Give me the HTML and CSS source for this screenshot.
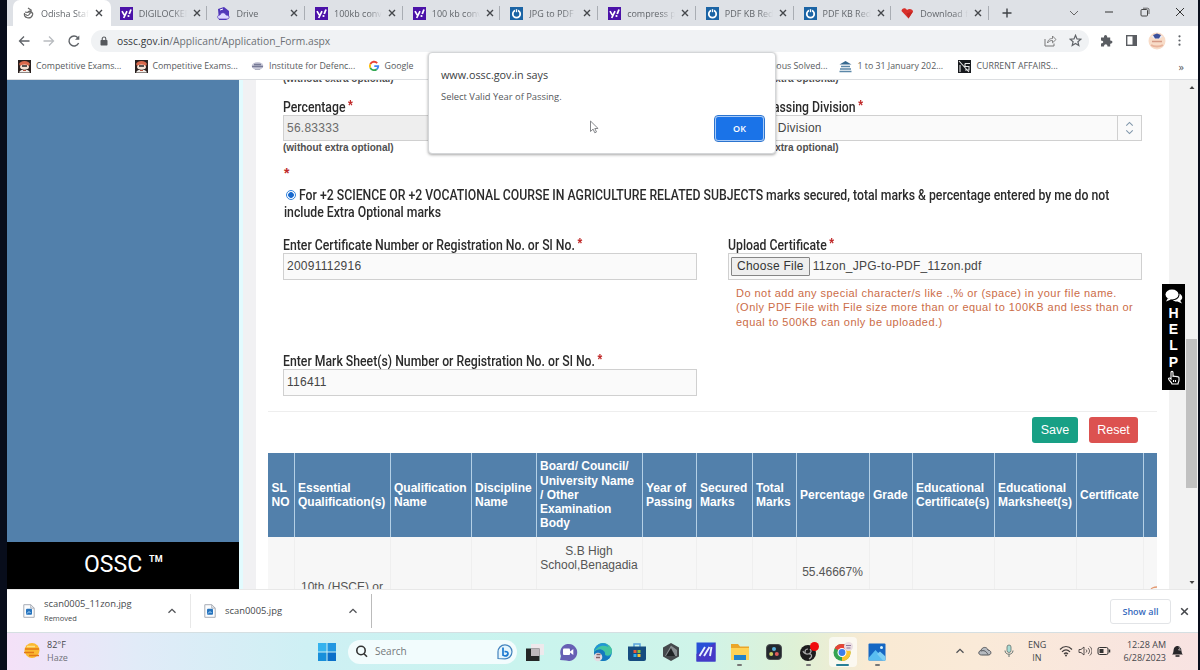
FILE: index.html
```html
<!DOCTYPE html>
<html lang="en">
<head>
    <meta charset="UTF-8">
    <meta name="viewport" content="width=device-width, initial-scale=1.0">
    <title>Odisha Staff Selection Commission</title>
    <link rel="stylesheet" href="styles.css">
</head>
<body>
    <svg class="defs" width="0" height="0">
        <symbol id="yahoo" viewBox="0 0 13 13"><rect width="13" height="13" fill="#4b12a8"/><path d="M2 4.200l2.300 4M7 4.200L3.700 11" stroke="#fff" stroke-width="1.700" fill="none"/><path d="M9.200 7L11 2.500" stroke="#fff" stroke-width="1.800"/><circle cx="8.500" cy="9" r="1.100" fill="#fff"/></symbol>
        <symbol id="pdf" viewBox="0 0 13 13"><rect width="13" height="13" fill="#1b64a5"/><circle cx="6.500" cy="7" r="3.700" fill="none" stroke="#fff" stroke-width="1.800"/><path d="M6.500 2v4" stroke="#1b64a5" stroke-width="3"/><path d="M6.500 2.200v3" stroke="#fff" stroke-width="1.400"/></symbol>
        <symbol id="x" viewBox="0 0 10 10"><path d="M2 2l6 6M8 2L2 8" stroke="#44474b" stroke-width="1.400" fill="none"/></symbol>
        <symbol id="exam" viewBox="0 0 13 13"><rect width="13" height="13" fill="#29201f"/><ellipse cx="6.500" cy="4" rx="5.300" ry="3" fill="#d9694c"/><ellipse cx="6.500" cy="7" rx="4.500" ry="2.500" fill="#f5e2d5"/><path d="M4 6h5" stroke="#222" stroke-width="1.500"/><path d="M1 12.500c1-4 10-4 11 0z" fill="#f2eeea"/><path d="M5 10.500h3" stroke="#b34a36"/></symbol>
        <symbol id="up" viewBox="0 0 10 10"><path d="M1.500 6.800L5 3.300l3.500 3.500" stroke="#505256" stroke-width="1.300" fill="none"/></symbol>
        <symbol id="file" viewBox="0 0 12 14"><path d="M.8.700h7l3.400 3.400v9.200H.8z" fill="#fbfcfe" stroke="#a9adb6"/><path d="M7.800.700v3.400h3.400" fill="none" stroke="#a9adb6"/><rect x="3" y="4.700" width="6" height="6" rx="1" fill="#2673bd"/><path d="M4 9.500l2-2 1.500 1.500" stroke="#bfe4ff" fill="none"/></symbol>
    </svg>

    <div class="window">
        <!-- tab strip -->
        <div class="tabs">
            <div class="tab active">
                <svg class="fav" viewBox="0 0 13 13"><path d="M6 1l3 2-3 2M3 5c3 1 5 0 7-1M2.500 6c-1 5 6 7 8 2 1-3-2-3-3-1s-3 2-4 0" fill="none" stroke="#666" stroke-width="1.200"/></svg>
                <span class="tab-title">Odisha Staff</span><svg class="close"><use href="#x"/></svg>
            </div>
            <div class="tab"><svg class="fav"><use href="#yahoo"/></svg><span class="tab-title">DIGILOCKER</span><svg class="close"><use href="#x"/></svg></div>
            <div class="tab">
                <svg class="fav" viewBox="0 0 13 13"><path d="M1 2l6-2 5 4v7l-3 2H2z" fill="#5137b9"/><path d="M2 12c-2-1-2-4 1-4 1-3 5-3 6 0 4 0 4 4 1 4z" fill="#dcd6ff" stroke="#5137b9" stroke-width=".7"/><path d="M3 3l3-1" stroke="#fff"/></svg>
                <span class="tab-title">Drive</span><svg class="close"><use href="#x"/></svg>
            </div>
            <div class="tab"><svg class="fav"><use href="#yahoo"/></svg><span class="tab-title">100kb converter</span><svg class="close"><use href="#x"/></svg></div>
            <div class="tab"><svg class="fav"><use href="#yahoo"/></svg><span class="tab-title">100 kb converter</span><svg class="close"><use href="#x"/></svg></div>
            <div class="tab"><svg class="fav"><use href="#pdf"/></svg><span class="tab-title">JPG to PDF</span><svg class="close"><use href="#x"/></svg></div>
            <div class="tab"><svg class="fav"><use href="#yahoo"/></svg><span class="tab-title">compress pdf</span><svg class="close"><use href="#x"/></svg></div>
            <div class="tab"><svg class="fav"><use href="#pdf"/></svg><span class="tab-title">PDF KB Reducer</span><svg class="close"><use href="#x"/></svg></div>
            <div class="tab"><svg class="fav"><use href="#pdf"/></svg><span class="tab-title">PDF KB Reducer</span><svg class="close"><use href="#x"/></svg></div>
            <div class="tab">
                <svg class="fav" viewBox="0 0 13 13"><path d="M.5 4c0-3 4-4 5.500-1 2-2 6-1 6 1.500L7.500 11.500z" fill="#d9302b"/><path d="M5.500 6.500l6.500-2-4.500 7z" fill="#c32622"/></svg>
                <span class="tab-title">Download file</span><svg class="close"><use href="#x"/></svg>
            </div>
            <svg class="plus" viewBox="0 0 12 12"><path d="M6 1.500v9M1.500 6h9" stroke="#3f4246" stroke-width="1.400"/></svg>
            <div class="controls">
                <svg viewBox="0 0 12 12"><path d="M2 4l4 4 4-4" stroke="#666" fill="none"/></svg>
                <svg viewBox="0 0 12 12"><path d="M2 5h8" stroke="#333"/></svg>
                <svg viewBox="0 0 12 12"><rect x="2" y="2.500" width="6.500" height="6.500" rx="1" fill="none" stroke="#444"/><path d="M4 1.200h4.500q1.500 0 1.500 1.500V7" fill="none" stroke="#444" stroke-width=".8"/></svg>
                <svg viewBox="0 0 12 12"><path d="M2 1l8 8M10 1l-8 8" stroke="#333"/></svg>
            </div>
        </div>

        <!-- address bar -->
        <div class="toolbar">
            <svg class="nav" viewBox="0 0 14 14"><path d="M12.500 7H2.500M7 2.500L2.500 7 7 11.500" stroke="#5f6368" stroke-width="1.300" fill="none"/></svg>
            <svg class="nav" viewBox="0 0 14 14"><path d="M1.500 7h10M7 2.500L11.500 7 7 11.500" stroke="#b9bcc0" stroke-width="1.300" fill="none"/></svg>
            <svg class="nav" viewBox="0 0 14 14"><path d="M11.600 9A5 5 0 1 1 10.800 3.700" stroke="#5f6368" stroke-width="1.400" fill="none"/><path d="M12.300 1.500v4.300H8z" fill="#5f6368"/></svg>
            <div class="omnibox">
                <svg class="lock" viewBox="0 0 8 10"><rect x=".5" y="4" width="7" height="5.500" rx=".7" fill="#55585c"/><path d="M2.200 4V2.800a1.800 1.800 0 0 1 3.600 0V4" fill="none" stroke="#55585c" stroke-width="1.100"/></svg>
                <span class="url"><b>ossc.gov.in</b>/Applicant/Application_Form.aspx</span>
                <svg class="share" viewBox="0 0 13 13"><path d="M1 5v7h9V9.500" fill="none" stroke="#777"/><path d="M3.500 9c.5-3.500 2.500-4.500 5-4.500V2L12 5.500 8.500 8.800V6.500C6.500 6.500 5 7 3.500 9z" fill="none" stroke="#777" stroke-width=".9"/></svg>
                <svg class="star" viewBox="0 0 13 13"><path d="M6.500 1.300l1.500 3.600 3.900.3-3 2.500.9 3.800-3.300-2-3.300 2 .9-3.800-3-2.500 3.900-.3z" fill="none" stroke="#5f6368" stroke-width="1.200"/></svg>
            </div>
            <div class="tools">
                <svg viewBox="0 0 13 13"><path d="M1 3.500h3C3.500 0 7.500 0 7.200 3.500h3V6.500c3-.3 3 3.500 0 3.200v2.800H7.500c0-3-3.500-3-3.500 0H1V9.500c3 0 3-3 0-3z" fill="#5a5d62"/></svg>
                <svg viewBox="0 0 13 13"><rect x="1.700" y="1.700" width="9.600" height="9.600" fill="none" stroke="#5a5d62" stroke-width="1.400"/><path d="M7.500 2h4v9h-4z" fill="#5a5d62"/></svg>
                <svg class="avatar" viewBox="0 0 18 18"><circle cx="9" cy="9" r="8.500" fill="#f8dcc8"/><path d="M3 4h12l-3 2.500H6z" fill="#e8edfa"/><path d="M5 3l4-1.500L13 3l-2 3.500H7z" fill="#3a509c"/><path d="M4 9.500h10" stroke="#d69a85" stroke-width="1.500"/><path d="M3 13c3 2 9 2 12 0" stroke="#e9b49c" stroke-width="2" fill="none"/></svg>
                <svg class="menu" viewBox="0 0 13 13"><circle cx="6.500" cy="2.300" r="1.100" fill="#5f6368"/><circle cx="6.500" cy="6.500" r="1.100" fill="#5f6368"/><circle cx="6.500" cy="10.700" r="1.100" fill="#5f6368"/></svg>
            </div>
        </div>

        <!-- bookmarks -->
        <div class="bookmarks">
            <a class="bm bm1"><svg class="fav"><use href="#exam"/></svg><span>Competitive Exams...</span></a>
            <a class="bm bm2"><svg class="fav"><use href="#exam"/></svg><span>Competitive Exams...</span></a>
            <a class="bm bm3"><svg class="fav" viewBox="0 0 13 13"><ellipse cx="6.500" cy="6" rx="5.800" ry="4" fill="#c9cad8"/><path d="M1 6.500h11M3 4.500h7" stroke="#777a96" stroke-width="1.500"/><path d="M4 9.500h5" stroke="#aeb0c0"/></svg><span>Institute for Defenc...</span></a>
            <a class="bm bm4"><svg class="fav google" viewBox="0 0 13 13"><g fill="none" stroke-width="2"><path d="M10 3.300A4.600 4.600 0 0 0 2.500 4.500" stroke="#ea4335"/><path d="M2.500 4.500a4.600 4.600 0 0 0 0 4" stroke="#fbbc05"/><path d="M2.500 8.500a4.600 4.600 0 0 0 7 1.500" stroke="#34a853"/><path d="M9.500 10c1.200-1 1.600-2 1.600-3.300H6.800" stroke="#4285f4"/></g></svg><span>Google</span></a>
            <a class="bm bm5"><span>Previous Solved...</span></a>
            <a class="bm bm6"><svg class="fav" viewBox="0 0 13 13"><path d="M.5 4.500L6.500 1l6 3.500z" fill="#37698f"/><path d="M2 6.500h9M1 9h11M.5 11.500h12" stroke="#5b87a8" stroke-width="1.300"/></svg><span>1 to 31 January 202...</span></a>
            <a class="bm bm7"><svg class="fav" viewBox="0 0 13 13"><rect width="13" height="13" fill="#17191d"/><path d="M1 1l10 11M7 3.500h5M7 3.500v3h4v3.500H7M2 5v7" stroke="#e8e8e8" fill="none" stroke-width="1.100"/></svg><span>CURRENT AFFAIRS...</span></a>
            <span class="more">»</span>
        </div>

        <!-- page -->
        <div class="page">
            <div class="sidebar"><div class="brand"><span>OSSC</span><sup>TM</sup></div></div>
            <div class="gutter"></div>
            <div class="panel">
                <div class="form">
                    <div class="cols clipped">
                        <div class="hint">(without extra optional)</div>
                        <div class="hint">(without extra optional)</div>
                    </div>
                    <div class="cols marks">
                        <div>
                            <label><span class="cond">Percentage<i>*</i></span></label>
                            <div class="input disabled">56.83333</div>
                            <div class="hint">(without extra optional)</div>
                        </div>
                        <div>
                            <label><span class="cond">Select Passing Division<i>*</i></span></label>
                            <div class="input select"><span>Second Division</span><svg viewBox="0 0 24 26"><path d="M8.500 10.500L12 7l3.500 3.500M8.500 15.500L12 19l3.500-3.500" fill="none" stroke="#8197ab" stroke-width="1.200"/></svg></div>
                            <div class="hint">(without extra optional)</div>
                        </div>
                    </div>
                    <div class="required">*</div>
                    <div class="declare">
                        <div class="line"><span class="radio"></span><span class="cond">For +2 SCIENCE OR +2 VOCATIONAL COURSE IN AGRICULTURE RELATED SUBJECTS marks secured, total marks &amp; percentage entered by me do not</span></div>
                        <div class="line"><span class="cond">include Extra Optional marks</span></div>
                    </div>
                    <div class="cols cert">
                        <div>
                            <label><span class="cond">Enter Certificate Number or Registration No. or Sl No.<i>*</i></span></label>
                            <div class="input">20091112916</div>
                        </div>
                        <div>
                            <label><span class="cond">Upload Certificate<i>*</i></span></label>
                            <div class="input upload"><span class="choose">Choose File</span><span>11zon_JPG-to-PDF_11zon.pdf</span></div>
                            <p class="note">Do not add any special character/s like .,% or (space) in your file name.<br>(Only PDF File with File size more than or equal to 100KB and less than or<br>equal to 500KB can only be uploaded.)</p>
                        </div>
                    </div>
                    <div class="cols">
                        <div>
                            <label><span class="cond">Enter Mark Sheet(s) Number or Registration No. or Sl No.<i>*</i></span></label>
                            <div class="input">116411</div>
                        </div>
                    </div>
                </div>
                <div class="actions"><button class="save">Save</button><button class="reset">Reset</button></div>
                <table>
                    <colgroup><col class="c1"><col class="c2"><col class="c3"><col class="c4"><col class="c5"><col class="c6"><col class="c7"><col class="c8"><col class="c9"><col class="c10"><col class="c11"><col class="c12"><col class="c13"><col class="c14"></colgroup>
                    <thead>
                        <tr>
                            <th>SL<br>NO</th>
                            <th>Essential<br>Qualification(s)</th>
                            <th>Qualification<br>Name</th>
                            <th>Discipline<br>Name</th>
                            <th>Board/ Council/<br>University Name<br>/ Other<br>Examination<br>Body</th>
                            <th>Year of<br>Passing</th>
                            <th>Secured<br>Marks</th>
                            <th>Total<br>Marks</th>
                            <th>Percentage</th>
                            <th>Grade</th>
                            <th>Educational<br>Certificate(s)</th>
                            <th>Educational<br>Marksheet(s)</th>
                            <th>Certificate</th>
                            <th></th>
                        </tr>
                    </thead>
                    <tbody>
                        <tr>
                            <td></td>
                            <td class="exam">10th (HSCE) or</td>
                            <td></td><td></td>
                            <td class="board">S.B High<br>School,Benagadia</td>
                            <td></td><td></td><td></td>
                            <td class="percent">55.46667%</td>
                            <td></td><td></td><td></td><td></td><td class="edit"><svg viewBox="0 0 8 5"><path d="M1 5c0-2 3-3 6-3" stroke="#e39a72" stroke-width="1.300" fill="none"/></svg></td>
                        </tr>
                    </tbody>
                </table>
            </div>
            <div class="scroll"><svg viewBox="0 0 12 12"><path d="M3.500 8h5L6 5z" fill="#444"/></svg><div class="thumb"></div><svg viewBox="0 0 12 12"><path d="M3.500 5h5L6 8z" fill="#444"/></svg></div>

            <div class="help">
                <svg viewBox="0 0 18 15"><ellipse cx="7" cy="5.500" rx="6.500" ry="5" fill="#fff"/><path d="M3 9l-2 3.500 5-2z" fill="#fff"/><path d="M14.500 4.500c4 2.500 3 6 .8 7.200L17 14.500l-4.500-2c-2 .2-4-.5-4.500-1.200 4 0 7-3 6.500-6.800z" fill="#fff"/></svg>
                <b>H</b><b>E</b><b>L</b><b>P</b>
                <svg viewBox="0 0 18 15"><path d="M6 9V2.500c0-1.500 2-1.500 2 0V7c0-1.300 2-1.200 2 0 0-1 2-1 2 .2 0-.8 2-.8 2 .6V10c0 2-1 2.500-1 4H7c0-2-3.500-3.500-3.500-5.500C4 7.500 5 8 6 9zM8.500 10v2M10.500 10v2" fill="none" stroke="#fff" stroke-width="1.100"/></svg>
            </div>
        </div>

        <!-- downloads -->
        <div class="downloads">
            <div class="dl first"><svg class="file"><use href="#file"/></svg><div class="dl-name">scan0005_11zon.jpg<small>Removed</small></div><svg class="up"><use href="#up"/></svg></div>
            <div class="dl second"><svg class="file"><use href="#file"/></svg><div class="dl-name">scan0005.jpg</div><svg class="up"><use href="#up"/></svg></div>
            <button class="showall">Show all</button>
            <svg class="dl-close"><use href="#x"/></svg>
        </div>

        <!-- taskbar -->
        <div class="taskbar">
            <div class="weather">
                <svg viewBox="0 0 18 18"><circle cx="9" cy="8.500" r="7.500" fill="#fbb931"/><path d="M2 7h14M1 10.500h10M6 13.500h10" stroke="#e37816" stroke-width="1.400"/><path d="M4 4.500h8" stroke="#fde08c" stroke-width="1.500"/></svg>
                <div>82°F<br><span>Haze</span></div>
            </div>
            <svg class="start" viewBox="0 0 18 18"><path d="M0 0h8.500v8.500H0z" fill="#35b3ee"/><path d="M9.500 0H18v8.500H9.500z" fill="#2297e1"/><path d="M0 9.500h8.500V18H0z" fill="#188fda"/><path d="M9.500 9.500H18V18H9.500z" fill="#0b6fc9"/></svg>
            <div class="search">
                <svg viewBox="0 0 13 13"><circle cx="6" cy="5.500" r="4.200" fill="none" stroke="#333" stroke-width="1.600"/><path d="M9 8.800l3 3" stroke="#333" stroke-width="1.600"/></svg>
                <span>Search</span>
                <svg class="bing" viewBox="0 0 16 16"><path d="M1 14.500V8a7 7 0 1 1 7 6.800z" fill="#e5f5fc" stroke="#4382bd" stroke-width="1.200"/><path d="M6 3.500v7.700l2 .8c4-.4 3.800-4.500.5-4.500l-1 .2" fill="none" stroke="#1c78d0" stroke-width="1.700"/></svg>
            </div>
            <div class="apps">
                <div><svg viewBox="0 0 20 20"><path d="M7 2h13v11H7z" fill="#eee9ec"/><path d="M2 6.500h13.500V19H2z" fill="#232626"/><path d="M7 6.500h8.500V14H7z" fill="#bcb8bb"/></svg></div>
                <div><svg viewBox="0 0 20 20"><path d="M2 18l1-4A8.500 8.500 0 1 1 8 18.500z" fill="#6760b4"/><rect x="5" y="6.500" width="7" height="6.500" rx="1" fill="#fff"/><path d="M12 9.500l3.300-2.500v6L12 10.500z" fill="#fff"/></svg></div>
                <div><svg viewBox="0 0 20 20"><circle cx="10" cy="10" r="9" fill="#1788cb"/><path d="M1 10C1 3 8 0 13 1.700c6 2 7.500 8 4.500 10.800-2 2-5.500 1-5.500 0C13 8 6 5 1 10z" fill="#43c4a1"/><path d="M1 10c0-4 3-8 8-8.800C13 1 15 3 15.500 5 9 2 4 5 1 10z" fill="#2295d6"/><path d="M1 10c5-5 11-2 11 2.500 0 2 3 3 5.800 1.500-2 4-5 5-8 5C4 19 1 14 1 10z" fill="#1479be"/><circle cx="5" cy="15" r="4.300" fill="#e3dbe1"/><path d="M3.500 12.500h4M3 15.500h4" stroke="#826269" stroke-width="1.400"/></svg></div>
                <div><svg viewBox="0 0 20 20"><path d="M7 5V2h6v3" fill="none" stroke="#5aa3dd" stroke-width="1.500"/><path d="M1 4.500h18V17q0 2-2 2H3q-2 0-2-2z" fill="#164c80"/><path d="M6.500 8h3v3h-3z" fill="#f15a36"/><path d="M10.500 8h3v3h-3z" fill="#88c440"/><path d="M6.500 12h3v3h-3z" fill="#2db0f0"/><path d="M10.500 12h3v3h-3z" fill="#fdc32b"/></svg></div>
                <div><svg viewBox="0 0 20 20"><path d="M10 1l8 4.500v9L10 19l-8-4.500v-9z" fill="#45494c"/><path d="M10 3.500L4 14h5l3-4 2 4h2V8z" fill="#888d90"/><path d="M10 6l-5 8h9z" fill="#202325"/></svg></div>
                <div><svg viewBox="0 0 20 20"><path d="M.5.500h19v19H.5z" fill="#2850d7"/><path d="M.5 12l19-11.500v19H.5z" fill="#4639c7"/><path d="M3.500 14L9 5M8 14l5.500-9M14 14l1.500-9" stroke="#e8f3ff" stroke-width="1.900"/></svg></div>
                <div class="run"><svg viewBox="0 0 20 20"><path d="M1 2h7l2 2.500h9V18H1z" fill="#eba629"/><path d="M1 6h18v12H1z" fill="#ffd356"/><path d="M4 13h12v5H4z" fill="#2383ca"/></svg></div>
                <div><svg viewBox="0 0 20 20"><rect x="2.500" y="2.500" width="15" height="15" rx="3.500" fill="#23282e" stroke="#4b4e50"/><circle cx="10" cy="7" r="2" fill="#59b0dc"/><circle cx="7.200" cy="12" r="2" fill="#c8cf61"/><circle cx="12.800" cy="12" r="2" fill="#dd5c5b"/></svg></div>
                <div class="run"><svg viewBox="0 0 20 20"><circle cx="9" cy="11" r="8" fill="#1c1b1d"/><path d="M9 7c-4 0-4 6 0 5 4-1 5 3 1 5M11 7c3 3-1 5-2 5s-4 0-5-3" fill="none" stroke="#a8a8a9" stroke-width="1.200"/><circle cx="15.500" cy="4.500" r="4.500" fill="#f00d0d"/></svg></div>
                <div class="run current"><svg viewBox="0 0 20 20"><circle cx="9" cy="10.500" r="8.500" fill="#35a451"/><path d="M9 10.500L1.600 6.200A8.500 8.500 0 0 1 16.400 6.200z" fill="#e74335"/><path d="M9 10.500l7.400-4.300A8.500 8.500 0 0 1 9 19z" fill="#fac430"/><circle cx="9" cy="10.500" r="4.500" fill="#fff"/><circle cx="9" cy="10.500" r="3.400" fill="#3d7eea"/><circle cx="15.500" cy="4.500" r="4.500" fill="#eadde1"/><path d="M13 3.500h5M13.500 6h4" stroke="#8e789b" stroke-width="1.200"/></svg></div>
                <div class="run"><svg viewBox="0 0 20 20"><rect x="1.500" y="1.500" width="17" height="17" rx="1" fill="#1567c3"/><path d="M1.500 16l7-8 10 10.500h-17z" fill="#59bdf1"/><path d="M10 12l3-2.500 5.500 5v4H16z" fill="#7dcff5"/><circle cx="14.500" cy="5.500" r="1.500" fill="#d6f4ff"/></svg></div>
            </div>
            <div class="tray">
                <svg class="t-up"><use href="#up"/></svg>
                <svg class="t-cloud" viewBox="0 0 14 12"><path d="M3.500 10C0 10 0 6 3 5.500c1-4 6-4 7-.5 4 .5 3.500 5 .5 5z" fill="#b7bbc0" stroke="#515459"/><path d="M3 6c3-1 5 0 7 3.500" stroke="#515459" fill="none"/></svg>
                <svg class="t-mic" viewBox="0 0 12 14"><rect x="4" y="1" width="4" height="7.500" rx="2" fill="#a8dcd4" stroke="#63716f" stroke-width=".8"/><path d="M2 6.500c0 5 8 5 8 0M6 10.500V13" fill="none" stroke="#63716f"/></svg>
                <div class="lang">ENG<br>IN</div>
                <svg class="t-wifi" viewBox="0 0 14 12"><path d="M1 4.500c3.500-4 8.500-4 12 0M3 6.800c2.500-2.600 5.500-2.600 8 0M5 9c1.300-1.300 2.700-1.300 4 0" stroke="#46403f" stroke-width="1.200" fill="none"/><circle cx="7" cy="10.500" r="1" fill="#46403f"/></svg>
                <svg class="t-vol" viewBox="0 0 14 12"><path d="M1 4.500h2L6 2v8L3 7.500H1zM8 4.500c1 1 1 2 0 3M10 3c2 2 2 4 0 6M11.800 1.500c3 3 3 6 0 9" stroke="#46403f" stroke-width=".9" fill="none"/></svg>
                <svg class="t-bat" viewBox="0 0 14 12"><rect x="1" y="2.500" width="10" height="7" rx="1.500" fill="none" stroke="#333"/><path d="M2.500 4h4v4h-4z" fill="#333"/><path d="M12.500 4.500v3" stroke="#333" stroke-width="1.500"/></svg>
                <div class="clock">12:28 AM<br>6/28/2023</div>
                <svg class="t-bell" viewBox="0 0 13 14"><path d="M1 10.500c2-1 1-5 2.500-7C5 1.500 8 1.500 9.500 3.500c1.500 2 .5 6 2.500 7z" fill="#282629"/><path d="M4.500 12h4" stroke="#282629" stroke-width="1.600"/><path d="M7.500 3h2.500L7.500 6h3" stroke="#eadfdf" stroke-width=".7" fill="none"/></svg>
            </div>
        </div>

        <!-- alert -->
        <div class="dialog">
            <div class="dialog-title">www.ossc.gov.in says</div>
            <div class="dialog-text">Select Valid Year of Passing.</div>
            <button class="ok">OK</button>
        </div>
        <svg class="cursor" viewBox="0 0 10 14"><path d="M1.500 1v10.500l2.600-2.400 1.700 3.700 1.700-.8-1.700-3.500h3.300z" fill="#fff" stroke="#85878b"/></svg>
    </div>
</body>
</html>
```
FILE: styles.css
```css
* {
    box-sizing: border-box;
    margin: 0;
    padding: 0;
}

body {
    background-color: #080d1b;
    height: 670px;
    overflow: hidden;
    font-family: "Liberation Sans", Arial, sans-serif;
}

.defs {
    position: absolute;
}

svg {
    display: block;
    flex: none;
}

button {
    font-family: inherit;
    border: none;
}

.window {
    position: relative;
    width: 1191px;
    height: 670px;
    margin-left: 7px;
    background-color: #fff;
    overflow: hidden;
}

.tabs,
.toolbar,
.bookmarks,
.downloads,
.taskbar,
.dialog {
    font-family: "Open Sans", "Noto Sans", sans-serif;
}

/* Tab strip */
.tabs {
    display: flex;
    align-items: center;
    height: 26px;
    padding-left: 6px;
    background-color: #dee1e6;
}

.tab {
    display: flex;
    align-items: center;
    width: 97.700px;
    height: 26px;
    padding-left: 9px;
    flex: none;
    background: linear-gradient(#a9adb3, #a9adb3) right 1px center / 1px 14px no-repeat;
}

.tab.active {
    background: #fff;
    border-radius: 7px 7px 0 0;
}

.fav {
    width: 13px;
    height: 13px;
}

.tab-title {
    width: 48px;
    margin-left: 6px;
    font-size: 9px;
    color: #62666b;
    white-space: nowrap;
    overflow: hidden;
    -webkit-mask-image: linear-gradient(90deg, #000 70%, transparent);
    mask-image: linear-gradient(90deg, #000 70%, transparent);
}

.close {
    width: 10px;
    height: 10px;
    margin-left: 5px;
}

.plus {
    width: 12px;
    height: 12px;
    margin-left: 11px;
}

.controls {
    display: flex;
    gap: 23.500px;
    margin-left: 55px;
}

.controls svg {
    width: 12px;
    height: 12px;
}

/* Address bar */
.toolbar {
    display: flex;
    align-items: center;
    height: 29px;
    padding-left: 10px;
}

.nav {
    width: 14px;
    height: 14px;
    margin-right: 11px;
}

.omnibox {
    display: flex;
    align-items: center;
    width: 998px;
    height: 22px;
    margin-left: -1px;
    padding: 0 7px 0 9px;
    border-radius: 11px;
    background-color: #f0f2f4;
}

.lock {
    width: 8px;
    height: 10px;
}

.url {
    margin-left: 9px;
    font-size: 10.300px;
    color: #6c7075;
}

.url b {
    font-weight: 400;
    color: #34373b;
}

.share {
    width: 13px;
    height: 13px;
    margin-left: auto;
}

.star {
    width: 13px;
    height: 13px;
    margin-left: 12px;
}

.tools {
    display: flex;
    align-items: center;
    gap: 12px;
    margin-left: 11px;
}

.tools svg {
    width: 13px;
    height: 13px;
}

.tools .avatar {
    width: 18px;
    height: 18px;
    margin: 0 -5px 0 -2px;
}

/* Bookmarks */
.bookmarks {
    display: flex;
    align-items: center;
    height: 25px;
    padding: 0 14px 2px 11px;
    border-bottom: 1px solid #dcdee1;
    font-size: 8.800px;
    color: #585b60;
}

.bm {
    display: flex;
    align-items: center;
    gap: 5px;
    flex: none;
    white-space: nowrap;
}

.bm1,
.bm2,
.bm3 {
    width: 116.500px;
}

.bm4 {
    width: 375px;
}

.bm5 {
    width: 85px;
    margin-right: 11px;
    justify-content: flex-end;
}

.bm6 {
    width: 119px;
}

.bm6,
.bm7 {
    gap: 6px;
}

.google {
    width: 12px;
    height: 12px;
}

.more {
    margin-left: auto;
    font-size: 11px;
}

/* Page */
.page {
    position: relative;
    display: flex;
    height: 509px;
    overflow: hidden;
}

.sidebar {
    display: flex;
    flex-direction: column;
    justify-content: flex-end;
    width: 232px;
    background-color: #5280ab;
}

.brand {
    display: flex;
    height: 47px;
    padding: 9px 0 0 77px;
    background-color: #000;
    color: #fff;
    font-family: Roboto, sans-serif;
    font-size: 23px;
    line-height: 28px;
}

.brand sup {
    margin-left: 7px;
    font-size: 9px;
    font-weight: 700;
    line-height: 17px;
}

.gutter {
    width: 17px;
    background-color: #f1f1f3;
    border-left: 4px solid #e2fbfe;
}

.panel {
    width: 913px;
    background-color: #fff;
}

.form {
    padding: 0 27px;
}

.cols {
    display: grid;
    grid-template-columns: 414px 414px;
    column-gap: 31px;
}

.clipped {
    margin: -8px 0 13px;
}

.hint {
    height: 12px;
    font-size: 10px;
    font-weight: 700;
    line-height: 13px;
    color: #505050;
    white-space: nowrap;
}

/* Roboto squeezed to the condensed width */
.cond {
    display: inline-block;
    transform: scaleX(0.875);
    transform-origin: left center;
    white-space: nowrap;
}

label {
    display: flex;
    height: 18px;
    font-family: Roboto, sans-serif;
    font-size: 14px;
    font-weight: 500;
    line-height: 19px;
    color: #2b2b2b;
}

label i,
.required {
    font-family: "Liberation Sans", sans-serif;
    font-size: 14px;
    font-style: normal;
    font-weight: 700;
    color: #c02a2a;
}

label i {
    display: inline-block;
    height: 16px;
    margin-left: 3px;
    line-height: 16px;
    vertical-align: 2px;
}

.input {
    display: flex;
    align-items: center;
    height: 27px;
    padding: 0 0 1px 3px;
    border: 1px solid #d0d0d0;
    background-color: #fafafa;
    font-size: 12px;
    letter-spacing: 0.250px;
    color: #454545;
}

.marks .input {
    height: 26px;
    padding-bottom: 0;
}

.disabled {
    background-color: #eee;
    color: #6b6b6b;
}

.select span {
    flex: 1;
}

.select svg {
    width: 24px;
    height: 24px;
    border-left: 1px solid #d0d0d0;
}

.required {
    height: 18px;
    margin: 11px 0 4px 1px;
    line-height: 18px;
}

.declare {
    height: 34px;
    margin: 0 0 15px 1px;
    font-family: Roboto, sans-serif;
    font-size: 14px;
    font-weight: 500;
    color: #2b2b2b;
}

.line {
    display: flex;
    align-items: center;
    height: 17px;
}

.radio {
    width: 10px;
    height: 10px;
    margin: 0 3px 0 2px;
    flex: none;
    border: 1px solid #3182dc;
    border-radius: 50%;
    background: radial-gradient(#1769cf 2.500px, #fff 3.200px);
}

.cert {
    height: 116px;
}

.choose {
    height: 19px;
    margin: 0 3px 0 -1px;
    padding: 0 5px;
    border: 1px solid #858585;
    border-radius: 1px;
    background-color: #eee;
    line-height: 17px;
    color: #333;
}

.note {
    margin: 6px 0 0 8px;
    font-size: 11px;
    letter-spacing: 0.460px;
    line-height: 14.300px;
    color: #cb6c47;
    white-space: nowrap;
}

.actions {
    display: flex;
    justify-content: flex-end;
    gap: 11px;
    height: 42px;
    margin: 15px 12px 0;
    padding: 5px 19px 0;
    border-top: 1px solid #eee;
}

.actions button {
    height: 26px;
    border-radius: 3px;
    color: #fff;
    font-size: 12.500px;
}

.save {
    width: 46px;
    background-color: #18a085;
}

.reset {
    width: 49px;
    background-color: #dc5250;
}

/* Results table */
table {
    width: 889px;
    margin-left: 12px;
    border-collapse: collapse;
    table-layout: fixed;
    font-size: 12px;
    line-height: 14.300px;
}

.c1 { width: 26px; }
.c2 { width: 96px; }
.c3 { width: 81px; }
.c4 { width: 65px; }
.c5 { width: 106px; }
.c6 { width: 54px; }
.c7 { width: 56px; }
.c8 { width: 44px; }
.c9 { width: 73px; }
.c10 { width: 43px; }
.c11 { width: 82px; }
.c12 { width: 82px; }
.c13 { width: 67px; }
.c14 { width: 14px; }

th {
    height: 84px;
    padding-left: 3.500px;
    border-right: 1px solid #b4d0e6;
    background-color: #5280ab;
    color: #fff;
    text-align: left;
    vertical-align: middle;
    white-space: nowrap;
}

th:last-child,
td:last-child {
    border-right: none;
}

td {
    height: 72px;
    border-right: 1px solid #efefef;
    background-color: #f7f7f7;
    color: #555;
    text-align: center;
    vertical-align: top;
    white-space: nowrap;
}

.exam {
    padding-top: 43px;
}

.board {
    padding-top: 7px;
}

.percent {
    padding-top: 28px;
}

.edit {
    padding: 48px 0 0 6px;
}

.edit svg {
    width: 8px;
    height: 5px;
}

.scroll {
    display: flex;
    flex-direction: column;
    justify-content: space-between;
    width: 29px;
    padding-left: 17px;
    background-color: #f2f2f2;
}

.scroll svg {
    width: 12px;
    height: 14px;
}

.thumb {
    width: 11px;
    height: 149px;
    margin-top: 158px;
    background-color: #c1c1c1;
}

.help {
    position: absolute;
    right: 13px;
    top: 204px;
    display: flex;
    flex-direction: column;
    align-items: center;
    width: 23px;
    height: 106px;
    padding-top: 5px;
    background-color: #000;
    color: #fff;
    font-size: 14px;
    line-height: 16.200px;
}

.help svg {
    width: 18px;
    height: 15px;
}

.help svg + b {
    margin-top: 1px;
}

/* Downloads */
.downloads {
    display: flex;
    align-items: center;
    height: 44px;
    border-top: 1px solid #e8e8e8;
    border-bottom: 1px solid #d5dfe2;
    font-size: 9.400px;
    color: #46494d;
}

.dl {
    display: flex;
    align-items: center;
    height: 34px;
    padding: 0 13px 0 16px;
    border-right: 1px solid #e8e8e8;
}

.dl.first {
    width: 184px;
}

.dl.second {
    width: 181px;
    padding-left: 13px;
    border-right-color: #bbb;
}

.file {
    width: 12px;
    height: 14px;
}

.dl-name {
    flex: 1;
    margin-left: 9px;
    line-height: 14px;
}

.dl-name small {
    display: block;
    font-size: 7.500px;
}

.up {
    width: 10px;
    height: 10px;
}

.showall {
    width: 61px;
    height: 25px;
    margin-left: auto;
    border: 1px solid #e2e4e7;
    border-radius: 3px;
    background-color: #fff;
    color: #376bbd;
    font-size: 9px;
    font-weight: 600;
}

.dl-close {
    width: 11px;
    height: 11px;
    margin: 0 8px 0 8px;
}

/* Taskbar */
.taskbar {
    display: flex;
    align-items: center;
    height: 37px;
    background: linear-gradient(90deg, #f4e1f8 0, #e1ebf8 130px, #cef0f4 300px, #c9f4ee 510px, #cff4e9 690px, #dff1d6 790px, #f9ead3 860px, #faead8 970px, #f8e3e2 100%);
    font-size: 9px;
    line-height: 13px;
    color: #46484c;
}

.weather {
    display: flex;
    align-items: center;
    gap: 6px;
    width: 311px;
    padding: 0 0 2px 16px;
}

.weather svg {
    width: 18px;
    height: 18px;
}

.weather span {
    color: #707279;
}

.start {
    width: 18px;
    height: 18px;
}

.search {
    display: flex;
    align-items: center;
    width: 169px;
    height: 24px;
    margin-left: 12px;
    padding: 0 4px 0 7px;
    border-radius: 12px;
    background-color: #f2fcfd;
    font-size: 10px;
    color: #73777a;
}

.search svg {
    width: 13px;
    height: 13px;
}

.search span {
    margin-left: 7px;
}

.search .bing {
    width: 16px;
    height: 16px;
    margin-left: auto;
}

.apps {
    display: flex;
}

.apps div {
    display: flex;
    flex-direction: column;
    align-items: center;
    width: 34.300px;
    height: 30px;
    padding-top: 5px;
}

.apps svg {
    width: 20px;
    height: 20px;
}

.apps .run::after {
    content: "";
    width: 5px;
    height: 2px;
    margin-top: 2px;
    border-radius: 1px;
    background-color: #777;
}

.apps .current {
    width: 28px;
    margin: 0 3.150px;
    border-radius: 4px;
    background-color: rgba(255, 255, 255, 0.65);
}

.apps .current::after {
    width: 13px;
    background-color: #287f96;
}

.tray {
    display: flex;
    align-items: center;
    margin-left: auto;
    padding: 0 14px 2px 0;
    text-align: right;
}

.tray svg {
    width: 14px;
    height: 12px;
}

.tray .t-up {
    width: 10px;
    height: 10px;
    margin-right: 13px;
}

.tray .t-mic {
    width: 12px;
    height: 14px;
    margin: 0 13px 0 11px;
}

.lang {
    width: 18px;
    margin-right: 13px;
    text-align: center;
}

.tray .t-vol {
    margin: 0 5px;
}

.clock {
    width: 50px;
    margin: 0 5px 0 5px;
    white-space: nowrap;
}

.tray .t-bell {
    width: 13px;
    height: 14px;
}

/* Alert dialog, on top of the page */
.dialog {
    position: absolute;
    left: 421px;
    top: 52px;
    width: 348px;
    height: 102px;
    padding: 14px 11px 14px 12px;
    border: 1px solid #d4d6d8;
    border-radius: 4px;
    background-color: #fff;
    box-shadow: 0 1px 3px rgba(0, 0, 0, 0.35);
    color: #55585c;
}

.dialog-title {
    font-size: 10.800px;
    line-height: 15px;
    color: #3b3e42;
}

.dialog-text {
    margin-top: 9px;
    font-size: 9.400px;
    line-height: 12px;
}

.ok {
    display: block;
    width: 49px;
    height: 25px;
    margin: 13px 0 0 auto;
    border: 1px solid #a9cbf8;
    border-radius: 3px;
    outline: 1px solid #2b74cf;
    background-color: #1a73e8;
    color: #fff;
    font-size: 9px;
    font-weight: 600;
}

.cursor {
    position: absolute;
    left: 582px;
    top: 120px;
    width: 10px;
    height: 14px;
}
```
